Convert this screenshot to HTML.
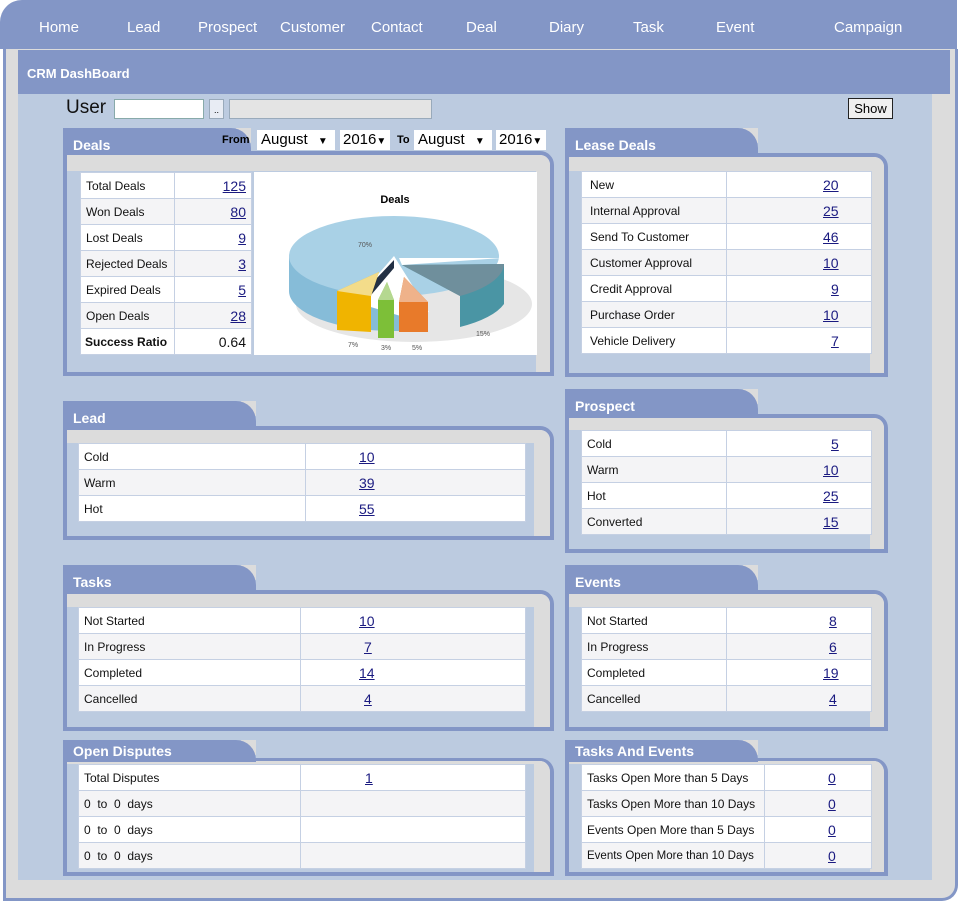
<!DOCTYPE html>
<html><head><meta charset="utf-8"><style>
*{box-sizing:border-box;margin:0;padding:0}
body{width:960px;height:914px;background:#fff;font-family:"Liberation Sans",sans-serif;position:relative;overflow:hidden}
.a{position:absolute}
.nav{left:0;top:0;width:957px;height:49px;background:#8396c6;border-top-left-radius:22px}
.nav span{position:absolute;top:19px;color:#fff;font-size:15px}
.tab{position:absolute;background:#8396c6;border-top-right-radius:20px;color:#fff;font-weight:bold;font-size:14px;padding:9px 0 0 10px;z-index:2}
.tc{position:absolute;background:#dcdcdc;width:15px;height:15px;z-index:1}
.bd{position:absolute;border:4px solid #8396c6;border-top-right-radius:14px;background:#bccbe0;overflow:hidden}
.g1{position:absolute;left:0;top:0;right:0;background:#dcdcdc}
.g2{position:absolute;top:0;bottom:0;width:14px;right:0;background:#dcdcdc}
table{position:absolute;border-collapse:collapse;background:#fff;font-size:12px;color:#111;table-layout:fixed}
td{border:1px solid #c5d0e3;height:26px;padding:0 5px;white-space:nowrap;overflow:hidden}
tr:nth-child(even) td{background:#f4f4f6}
u{color:#1a1a80;font-size:14px}
</style></head><body>
<div class="a nav">
<span style="left:39px">Home</span><span style="left:127px">Lead</span><span style="left:198px">Prospect</span><span style="left:280px">Customer</span><span style="left:371px">Contact</span><span style="left:466px">Deal</span><span style="left:549px">Diary</span><span style="left:633px">Task</span><span style="left:716px">Event</span><span style="left:834px">Campaign</span>
</div>
<div class="a" style="left:3px;top:49px;width:955px;height:852px;border:3px solid #8396c6;border-top:none;border-bottom-right-radius:16px;background:#dcdcdc"></div>
<div class="a" style="left:18px;top:50px;width:932px;height:44px;background:#8396c6;color:#fff;font-weight:bold;font-size:13px;padding:16px 0 0 9px">CRM DashBoard</div>
<div class="a" style="left:18px;top:94px;width:914px;height:786px;background:#bccbe0"></div>
<div class="a" style="left:66px;top:97px;font-size:19px;color:#111">User</div>
<div class="a" style="left:114px;top:99px;width:90px;height:20px;background:#fff;border:1px solid #8aa"></div>
<div class="a" style="left:209px;top:99px;width:15px;height:20px;background:#e8ecf4;border:1px solid #9ab;font-size:9px;text-align:center;line-height:20px">..</div>
<div class="a" style="left:229px;top:99px;width:203px;height:20px;background:#e4e4e4;border:1px solid #9ab"></div>
<div class="a" style="left:848px;top:98px;width:45px;height:21px;background:#f0f0f0;border:1px solid #222;font-size:13px;text-align:center;line-height:19px">Show</div>

<!-- Deals -->
<div class="tc" style="left:236px;top:128px"></div>
<div class="tab" style="left:63px;top:128px;width:188px;height:26px">Deals</div>
<div class="a" style="left:222px;top:134px;font-size:11px;font-weight:bold;z-index:3">From</div>
<div class="a" style="left:257px;top:130px;width:78px;height:20px;background:#fff;font-size:15px;padding:1px 4px;z-index:3">August <span style="font-size:10px;margin-left:6px">▼</span></div>
<div class="a" style="left:340px;top:130px;width:50px;height:20px;background:#fff;font-size:15px;padding:1px 3px;z-index:3">2016<span style="font-size:10px">▼</span></div>
<div class="a" style="left:397px;top:134px;font-size:11px;font-weight:bold;z-index:3">To</div>
<div class="a" style="left:414px;top:130px;width:78px;height:20px;background:#fff;font-size:15px;padding:1px 4px;z-index:3">August <span style="font-size:10px;margin-left:6px">▼</span></div>
<div class="a" style="left:496px;top:130px;width:50px;height:20px;background:#fff;font-size:15px;padding:1px 3px;z-index:3">2016<span style="font-size:10px">▼</span></div>
<div class="bd" style="left:63px;top:151px;width:491px;height:225px"><div class="g1" style="height:16px"></div><div class="g2"></div></div>
<table style="left:80px;top:172px;width:171px">
<col style="width:94px"><col style="width:77px">
<tr><td>Total Deals</td><td align="right"><u>125</u></td></tr>
<tr><td>Won Deals</td><td align="right"><u>80</u></td></tr>
<tr><td>Lost Deals</td><td align="right"><u>9</u></td></tr>
<tr><td>Rejected Deals</td><td align="right"><u>3</u></td></tr>
<tr><td>Expired Deals</td><td align="right"><u>5</u></td></tr>
<tr><td>Open Deals</td><td align="right"><u>28</u></td></tr>
<tr><td style="font-weight:bold;font-size:12px;padding-left:4px">Success Ratio</td><td align="right" style="font-size:14px">0.64</td></tr>
</table>
<svg class="a" style="left:254px;top:172px" width="283" height="183" viewBox="0 0 283 183">
<rect width="283" height="183" fill="#fff"/>
<text x="141" y="31" font-size="11" font-weight="bold" text-anchor="middle" font-family="Liberation Sans">Deals</text>
<ellipse cx="160" cy="132" rx="118" ry="38" fill="#e6e6e6"/>
<path d="M35 84 L35 119 A105 40 0 0 0 140 159 L150 159 L150 95 Z" fill="#86bcd8"/>
<ellipse cx="140" cy="84" rx="105" ry="40" fill="#a9d1e6"/>
<path d="M148 93 L250 92 L250 132 A105 40 0 0 1 206 155 L206 124 Z" fill="#4a95a4"/>
<path d="M148 93 L250 92 A105 40 0 0 1 206 124 Z" fill="#6f8f9c"/>
<path d="M145 86 L248 86 L148 93 Z" fill="#fff"/>
<path d="M140 84 L100 130 L150 145 L175 140 Z" fill="#fff"/>
<path d="M140 88 L104 126 L106 136 L140 96 Z" fill="#233044"/>
<path d="M125 100 L83 119 L83 158 L117 160 L117 124 Z" fill="#f0b400"/>
<path d="M125 100 L83 119 L117 124 Z" fill="#f3dc8a"/>
<path d="M133 110 L124 128 L124 166 L140 166 L140 128 Z" fill="#7dbf38"/>
<path d="M133 110 L124 128 L140 128 Z" fill="#b5d890"/>
<path d="M150 105 L145 130 L145 160 L174 160 L174 130 Z" fill="#e87a2a"/>
<path d="M150 105 L145 130 L174 130 Z" fill="#efb28a"/>
<g font-size="7" fill="#555" font-family="Liberation Sans"><text x="104" y="75">70%</text><text x="222" y="164">15%</text><text x="94" y="175">7%</text><text x="127" y="178">3%</text><text x="158" y="178">5%</text></g>
</svg>

<!-- Lease Deals -->
<div class="tc" style="left:743px;top:128px"></div>
<div class="tab" style="left:565px;top:128px;width:193px;height:26px">Lease Deals</div>
<div class="bd" style="left:565px;top:153px;width:323px;height:224px"><div class="g1" style="height:14px"></div><div class="g2"></div></div>
<table style="left:581px;top:171px;width:290px">
<col style="width:145px"><col style="width:145px">
<tr><td style="padding-left:8px">New</td><td style="padding-left:96px"><u>20</u></td></tr>
<tr><td style="padding-left:8px">Internal Approval</td><td style="padding-left:96px"><u>25</u></td></tr>
<tr><td style="padding-left:8px">Send To Customer</td><td style="padding-left:96px"><u>46</u></td></tr>
<tr><td style="padding-left:8px">Customer Approval</td><td style="padding-left:96px"><u>10</u></td></tr>
<tr><td style="padding-left:8px">Credit Approval</td><td style="padding-left:104px"><u>9</u></td></tr>
<tr><td style="padding-left:8px">Purchase Order</td><td style="padding-left:96px"><u>10</u></td></tr>
<tr><td style="padding-left:8px">Vehicle Delivery</td><td style="padding-left:104px"><u>7</u></td></tr>
</table>

<!-- Lead -->
<div class="tc" style="left:241px;top:401px"></div>
<div class="tab" style="left:63px;top:401px;width:193px;height:27px">Lead</div>
<div class="bd" style="left:63px;top:426px;width:491px;height:114px"><div class="g1" style="height:13px"></div><div class="g2" style="width:16px"></div></div>
<table style="left:78px;top:443px;width:447px">
<col style="width:227px"><col style="width:220px">
<tr><td>Cold</td><td style="padding-left:53px"><u>10</u></td></tr>
<tr><td>Warm</td><td style="padding-left:53px"><u>39</u></td></tr>
<tr><td>Hot</td><td style="padding-left:53px"><u>55</u></td></tr>
</table>

<!-- Prospect -->
<div class="tc" style="left:743px;top:389px"></div>
<div class="tab" style="left:565px;top:389px;width:193px;height:27px">Prospect</div>
<div class="bd" style="left:565px;top:414px;width:323px;height:139px"><div class="g1" style="height:12px"></div><div class="g2"></div></div>
<table style="left:581px;top:430px;width:290px">
<col style="width:145px"><col style="width:145px">
<tr><td>Cold</td><td style="padding-left:104px"><u>5</u></td></tr>
<tr><td>Warm</td><td style="padding-left:96px"><u>10</u></td></tr>
<tr><td>Hot</td><td style="padding-left:96px"><u>25</u></td></tr>
<tr><td>Converted</td><td style="padding-left:96px"><u>15</u></td></tr>
</table>

<!-- Tasks -->
<div class="tc" style="left:241px;top:565px"></div>
<div class="tab" style="left:63px;top:565px;width:193px;height:27px">Tasks</div>
<div class="bd" style="left:63px;top:590px;width:491px;height:141px"><div class="g1" style="height:13px"></div><div class="g2" style="width:16px"></div></div>
<table style="left:78px;top:607px;width:447px">
<col style="width:222px"><col style="width:225px">
<tr><td>Not Started</td><td style="padding-left:58px"><u>10</u></td></tr>
<tr><td>In Progress</td><td style="padding-left:63px"><u>7</u></td></tr>
<tr><td>Completed</td><td style="padding-left:58px"><u>14</u></td></tr>
<tr><td>Cancelled</td><td style="padding-left:63px"><u>4</u></td></tr>
</table>

<!-- Events -->
<div class="tc" style="left:743px;top:565px"></div>
<div class="tab" style="left:565px;top:565px;width:193px;height:27px">Events</div>
<div class="bd" style="left:565px;top:590px;width:323px;height:141px"><div class="g1" style="height:13px"></div><div class="g2"></div></div>
<table style="left:581px;top:607px;width:290px">
<col style="width:145px"><col style="width:145px">
<tr><td>Not Started</td><td style="padding-left:102px"><u>8</u></td></tr>
<tr><td>In Progress</td><td style="padding-left:102px"><u>6</u></td></tr>
<tr><td>Completed</td><td style="padding-left:96px"><u>19</u></td></tr>
<tr><td>Cancelled</td><td style="padding-left:102px"><u>4</u></td></tr>
</table>

<!-- Open Disputes -->
<div class="tc" style="left:241px;top:740px"></div>
<div class="tab" style="left:63px;top:740px;width:193px;height:22px;padding-top:3px">Open Disputes</div>
<div class="bd" style="left:63px;top:758px;width:491px;height:118px;border-top-width:3px"><div class="g1" style="height:3px"></div><div class="g2" style="width:16px"></div></div>
<table style="left:78px;top:764px;width:447px">
<col style="width:222px"><col style="width:225px">
<tr><td>Total Disputes</td><td style="padding-left:64px"><u>1</u></td></tr>
<tr><td>0 &nbsp;to &nbsp;0 &nbsp;days</td><td></td></tr>
<tr><td>0 &nbsp;to &nbsp;0 &nbsp;days</td><td></td></tr>
<tr><td>0 &nbsp;to &nbsp;0 &nbsp;days</td><td></td></tr>
</table>

<!-- Tasks And Events -->
<div class="tc" style="left:743px;top:740px"></div>
<div class="tab" style="left:565px;top:740px;width:193px;height:22px;padding-top:3px">Tasks And Events</div>
<div class="bd" style="left:565px;top:758px;width:323px;height:118px;border-top-width:3px"><div class="g1" style="height:3px"></div><div class="g2"></div></div>
<table style="left:581px;top:764px;width:290px">
<col style="width:183px"><col style="width:107px">
<tr><td>Tasks Open More than 5 Days</td><td style="padding-left:63px"><u>0</u></td></tr>
<tr><td>Tasks Open More than 10 Days</td><td style="padding-left:63px"><u>0</u></td></tr>
<tr><td>Events Open More than 5 Days</td><td style="padding-left:63px"><u>0</u></td></tr>
<tr><td style="font-size:11.5px;padding:0 2px 0 5px">Events Open More than 10 Days</td><td style="padding-left:63px"><u>0</u></td></tr>
</table>
</body></html>
